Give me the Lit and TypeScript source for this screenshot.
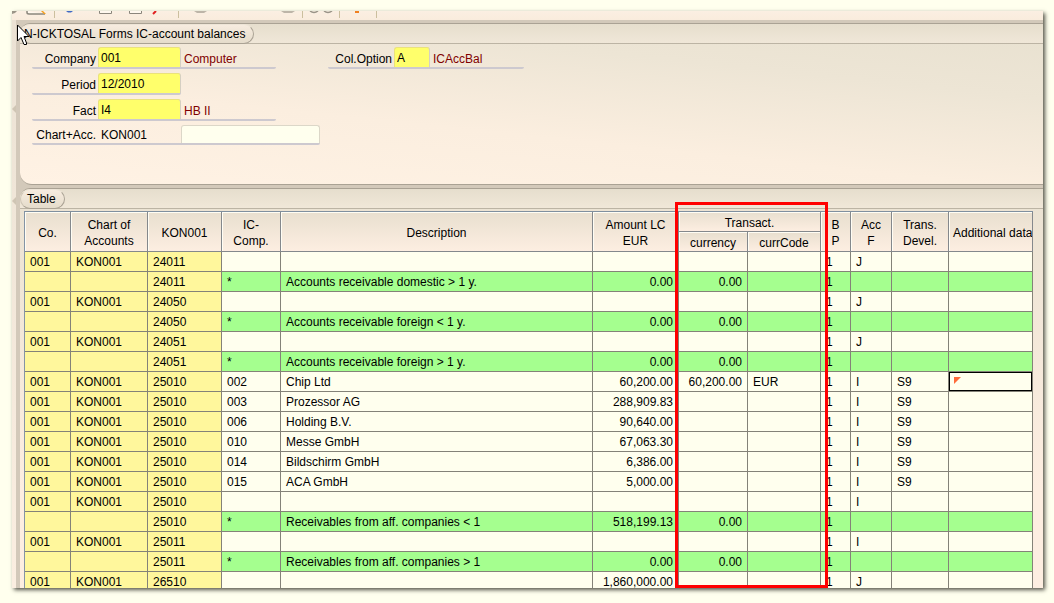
import { LitElement, html, css, svg, nothing } from "lit";
import { customElement } from "lit/decorators.js";
import { classMap } from "lit/directives/class-map.js";

interface Row {
  co: string;
  acc: string;
  desc?: string;
  ic?: string;
  amount?: string;
  cur?: string;
  code?: string;
  f?: string;
  dev?: string;
  sum?: boolean;
  active?: boolean;
}

const head = (acc: string, f: string, amount = ""): Row => ({ co: "001", acc, f, amount });
const sum = (acc: string, desc: string, amount = "0.00"): Row => ({
  co: "", acc, ic: "*", desc, amount, cur: "0.00", sum: true,
});
const item = (ic: string, desc: string, amount: string): Row => ({
  co: "001", acc: "25010", ic, desc, amount, f: "I", dev: "S9",
});

const ROWS: Row[] = [
  head("24011", "J"),
  sum("24011", "Accounts receivable domestic > 1 y."),
  head("24050", "J"),
  sum("24050", "Accounts receivable foreign < 1 y."),
  head("24051", "J"),
  sum("24051", "Accounts receivable foreign > 1 y."),
  { ...item("002", "Chip Ltd", "60,200.00"), cur: "60,200.00", code: "EUR", active: true },
  item("003", "Prozessor AG", "288,909.83"),
  item("006", "Holding B.V.", "90,640.00"),
  item("010", "Messe GmbH", "67,063.30"),
  item("014", "Bildschirm GmbH", "6,386.00"),
  item("015", "ACA GmbH", "5,000.00"),
  head("25010", "I"),
  sum("25010", "Receivables from aff. companies < 1", "518,199.13"),
  head("25011", "I"),
  sum("25011", "Receivables from aff. companies > 1"),
  head("26510", "J", "1,860,000.00"),
];

@customElement("selection-form")
class SelectionForm extends LitElement {
  static styles = css`
    :host { display: block; }
    .form { display: grid; grid-template-columns: auto auto 1fr; column-gap: 8px; padding: 3px 12px 39px; }
    .col { display: flex; flex-direction: column; align-items: flex-start; gap: 4px; }
    .field { display: flex; box-sizing: border-box; height: 22px; border-bottom: 2px solid #cdc9cf; border-radius: 0 0 2px 2px; line-height: 24px; }
    .wide { width: 244px; }
    .last { width: 288px; height: 20px; line-height: 20px; }
    .option { width: 196px; }
    label { width: 64px; padding-right: 2px; text-align: right; white-space: nowrap; }
    input { box-sizing: border-box; width: 83px; height: 100%; margin: 0; padding: 0 2px; border: 1px solid #eae27c;
      border-right-color: #d5cfc2; border-bottom: 0; border-radius: 3px 3px 0 0; background: #ffff6b; color: #000;
      font: inherit; outline: none; }
    .short { width: 36px; }
    .plain { border-color: transparent; background: transparent; }
    .free { width: 139px; border-color: #dcd7c8; background: #ffffee; }
    output { padding-left: 3px; color: #800000; }
  `;

  render() {
    return html`<form class="form">
      <div class="col">
        <div class="field wide"><label for="company">Company</label><input id="company" value="001" /><output for="company">Computer</output></div>
        <div class="field"><label for="period">Period</label><input id="period" value="12/2010" /></div>
        <div class="field wide"><label for="fact">Fact</label><input id="fact" value="I4" /><output for="fact">HB II</output></div>
        <div class="field last"><label for="chart">Chart+Acc.</label><input id="chart" class="plain" value="KON001" /><input class="free" aria-label="Account" /></div>
      </div>
      <div class="col">
        <div class="field option"><label for="option">Col.Option</label><input id="option" class="short" value="A" /><output for="option">ICAccBal</output></div>
      </div>
    </form>`;
  }
}

@customElement("balance-table")
class BalanceTable extends LitElement {
  static styles = css`
    :host { display: block; }
    table { width: 100%; table-layout: fixed; border-collapse: separate; border-spacing: 0;
      border-left: 1px solid #8494a5; border-top: 1px solid #7f8f9f; line-height: 16px; }
    .w46 { width: 46px; } .w77 { width: 77px; } .w74 { width: 74px; } .w59 { width: 59px; }
    .w86 { width: 86px; } .w69 { width: 69px; } .w73 { width: 73px; } .w30 { width: 30px; }
    .w41 { width: 41px; } .w57 { width: 57px; } .w84 { width: 84px; }
    th, td { box-sizing: border-box; height: 20px; border-right: 1px solid #848278; border-bottom: 1px solid #848278;
      overflow: hidden; white-space: nowrap; font-weight: normal; }
    th { padding: 2px 0 0; border-color: #84888c; background: linear-gradient(#e8dfcf, #fdeee1); box-shadow: inset 1px 1px #fffdf4; text-align: center; vertical-align: middle; }
    .tall { height: 40px; }
    .cut { padding-left: 4px; text-align: left; }
    td { padding: 0 5px; background: #ffffee; }
    .key { background: #fff79c; }
    .sum td:not(.key) { background: #a5ff8f; }
    .active { box-shadow: inset 0 0 0 1px #000; }
    .num { text-align: right; }
    .flag { display: block; width: 7px; height: 7px; margin-top: -3px; fill: #ff6b39; }
  `;

  private row(r: Row) {
    return html`<tr class=${classMap({ sum: !!r.sum })}>
      <td class="key">${r.co}</td>
      <td class="key">${r.co ? "KON001" : nothing}</td>
      <td class="key">${r.acc}</td>
      <td>${r.ic}</td>
      <td>${r.desc}</td>
      <td class="num">${r.amount}</td>
      <td class="num">${r.cur}</td>
      <td>${r.code}</td>
      <td>1</td>
      <td>${r.f}</td>
      <td>${r.dev}</td>
      <td class=${classMap({ active: !!r.active })}>
        ${r.active ? html`<svg class="flag" viewBox="0 0 7 7">${svg`<path d="M0 0H7L0 7Z" />`}</svg>` : nothing}
      </td>
    </tr>`;
  }

  render() {
    return html`<table>
      <colgroup>
        <col class="w46" /><col class="w77" /><col class="w74" /><col class="w59" /><col /><col class="w86" />
        <col class="w69" /><col class="w73" /><col class="w30" /><col class="w41" /><col class="w57" /><col class="w84" />
      </colgroup>
      <thead>
        <tr>
          <th class="tall" rowspan="2">Co.</th>
          <th rowspan="2">Chart of<br />Accounts</th>
          <th rowspan="2">KON001</th>
          <th rowspan="2">IC-<br />Comp.</th>
          <th rowspan="2">Description</th>
          <th rowspan="2">Amount LC<br />EUR</th>
          <th colspan="2">Transact.</th>
          <th rowspan="2">B<br />P</th>
          <th rowspan="2">Acc<br />F</th>
          <th rowspan="2">Trans.<br />Devel.</th>
          <th class="cut" rowspan="2">Additional data</th>
        </tr>
        <tr><th>currency</th><th>currCode</th></tr>
      </thead>
      <tbody>${ROWS.map((r) => this.row(r))}</tbody>
    </table>`;
  }
}

@customElement("app-root")
class AppRoot extends LitElement {
  static styles = css`
    :host { display: flex; box-sizing: border-box; height: 100vh; padding: 11px 11px 15px 12px; background: #ffffee;
      color: #000; font: 12px "Liberation Sans", Arial, sans-serif; }
    .window { position: relative; flex: 1; min-width: 0; display: flex; flex-direction: column; overflow: hidden; background: #d3c9ba; }
    .frame { display: flex; flex: 1; min-width: 0; box-shadow: 2px 2px 4px #55554a; }
    .bar { display: flex; flex: none; height: 9px; overflow: hidden; background: linear-gradient(#fbefe2, #f9ecdd); }
    .icons { flex: none; width: 376px; height: 9px; }
    .body { display: flex; flex: 1; min-height: 0; }
    .rail { display: flex; flex-direction: column; flex: none; box-sizing: border-box; width: 8px; border-right: 4px solid #d3c9ba; background: linear-gradient(#ebe2d4, #fbeee1); }
    .grip { width: 4px; height: 8px; margin-top: 85px; fill: #cfc5b4; }
    .grip + .grip { margin-top: 84px; }
    .panes { display: flex; flex: 1; flex-direction: column; gap: 3px; min-width: 0; padding-top: 3px; }
    .pane { border-top: 1px solid #aaa294; }
    .upper { border-bottom: 1px solid #aaa294; border-radius: 10px 0 0 12px; overflow: hidden;
      background: linear-gradient(186deg, #e8e1d0 0, #ede5d5 28%, #fbeedf 62%, #fff2e4 100%); }
    .lower { flex: 1; min-height: 0; overflow: hidden; border-radius: 10px 0 0 0; background: linear-gradient(#eae2d2, #fdeee1 300px); }
    header { display: flex; box-sizing: border-box; height: 20px; border-bottom: 1px solid #bcb4a4; background: linear-gradient(#e6decd, #f0e7d8); }
    h2 { box-sizing: border-box; height: 20px; margin: 0; padding: 0 8px 0 6px; border: 1px solid #aaa294; border-top-color: #eee5d7; border-left-color: #cfc6b6;
      border-radius: 10px; background: linear-gradient(#f7ecdf, #e5dccb); font: inherit; line-height: 18px; white-space: nowrap; }
    .title { padding-left: 4px; border-left: 0; }
    .grid { padding: 2px 10px 0 4px; }
    .mark { position: absolute; right: 215px; bottom: 0; top: 191px; width: 153px; box-sizing: border-box; border: 3px solid #ff0000; pointer-events: none; }
    .cursor { position: absolute; left: 5px; top: 13px; width: 13px; height: 22px; }
  `;

  private icons() {
    return html`<svg class="icons" viewBox="0 0 376 9" aria-hidden="true">
      <path d="M0 0H5L3 2L0 3Z" fill="#9b9588" />
      <path d="M15 0V1.5Q15 3 17 3H33" fill="#fff8ee" stroke="#8b867c" stroke-width="1.5" />
      <path d="M29 0H31L34 3H32Z" fill="#f5a01c" />
      <path d="M54 0H61L59 1.5H56Z" fill="#3f68c4" />
      <path d="M87.500 0V2.500H99.500V0M117.500 0V2.500H129.500V0" fill="#fff8ee" stroke="#8b867c" />
      <path d="M141 3L144 0" stroke="#e02020" stroke-width="2" />
      <path d="M182 0H195L192 2H185ZM269 0H283L280 2H272Z" fill="#bdb5a8" />
      <path d="M298 0Q302 3 306 0M312 0Q316 3 320 0" fill="none" stroke="#9a9488" stroke-width="1.5" />
      <rect x="343" y="0" width="4" height="2" fill="#f08020" />
      <path d="M42.500 0V7M166.500 0V7M290.500 0V7M327.500 0V7M364.500 0V7" stroke="#cbbf9e" />
    </svg>`;
  }

  render() {
    return html`<div class="frame"><main class="window">
      <div class="bar">${this.icons()}</div>
      <div class="body">
        <div class="rail">
          <svg class="grip" viewBox="0 0 4 8"><path d="M4 0V8L0 4Z" /></svg>
          <svg class="grip" viewBox="0 0 4 8"><path d="M4 0V8L0 4Z" /></svg>
        </div>
        <div class="panes">
          <section class="pane upper">
            <header><h2 class="title">N-ICKTOSAL Forms IC-account balances</h2></header>
            <selection-form></selection-form>
          </section>
          <section class="pane lower">
            <header><h2>Table</h2></header>
            <div class="grid"><balance-table></balance-table></div>
          </section>
        </div>
      </div>
      <div class="mark"></div>
      <svg class="cursor" viewBox="0 0 13 22" aria-hidden="true">
        <path d="M.5 1V17L4 13.500L7 20.500H9.500V19L7 12.500H12Z" fill="#fff" stroke="#000" />
      </svg>
    </main></div>`;
  }
}
